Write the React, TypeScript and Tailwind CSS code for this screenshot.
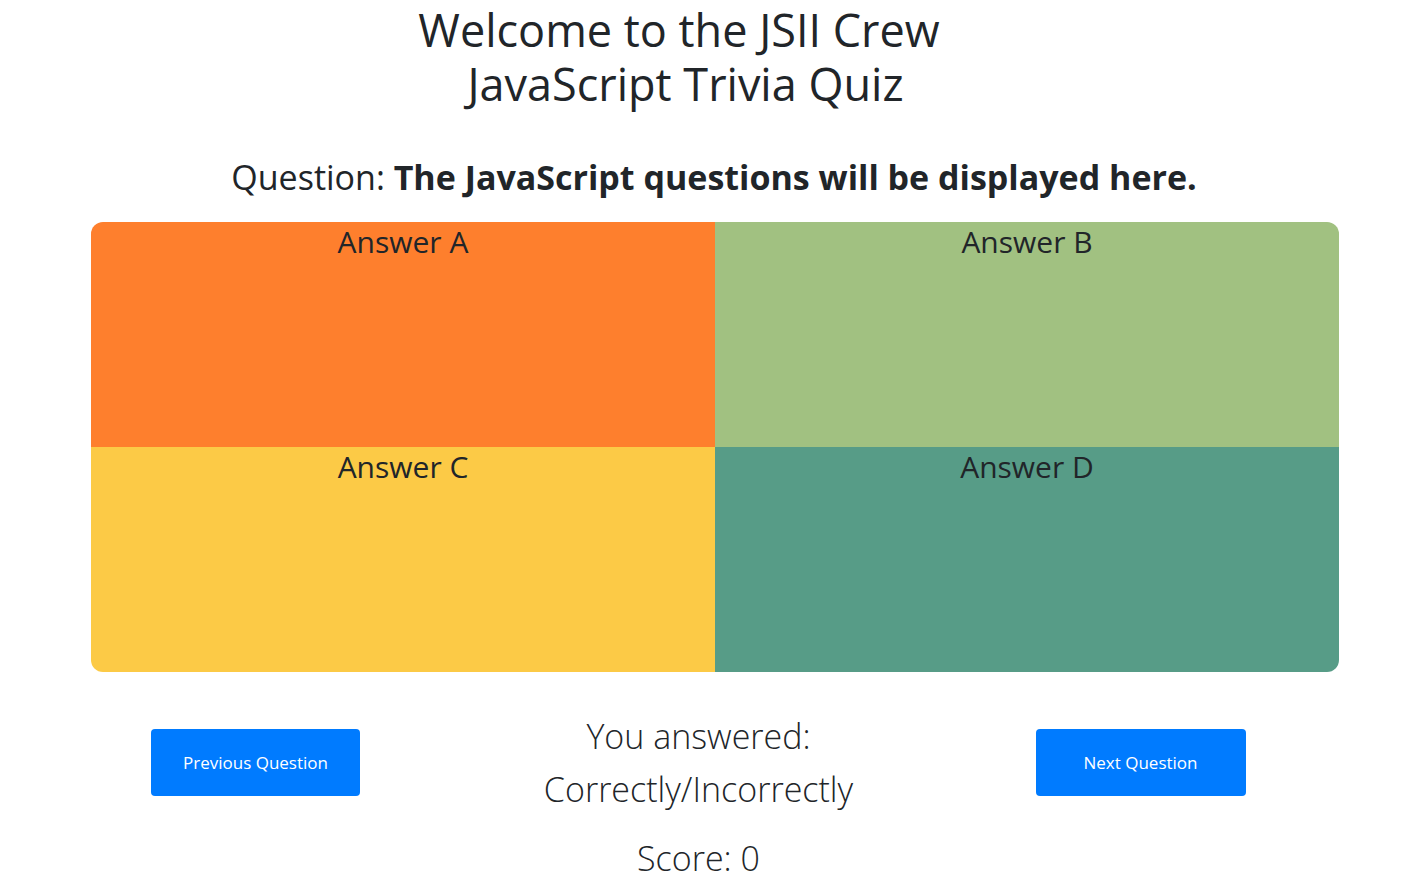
import React from "react"

const answers = [
  { label: "Answer A", color: "bg-[#fe7f2d]", corner: "rounded-tl-xl" },
  { label: "Answer B", color: "bg-[#a1c181]", corner: "rounded-tr-xl" },
  { label: "Answer C", color: "bg-[#fcca46]", corner: "rounded-bl-xl" },
  { label: "Answer D", color: "bg-[#579c87]", corner: "rounded-br-xl" },
]

export default function App() {
  return (
    <div className="min-h-[896px] bg-white text-[#212529] font-['Open_Sans',sans-serif]">
      <h1 className="pt-[3px] text-center text-[45px] font-medium leading-[54px]">
        <span className="block pr-[70px]">Welcome to the JSII Crew</span>
        <span className="block pr-[57px]">JavaScript Trivia Quiz</span>
      </h1>

      <h2 className="mt-[46px] text-center text-[34px] font-medium leading-[40px]">
        Question: <span className="font-bold">The JavaScript questions will be displayed here.</span>
      </h2>

      <div className="ml-[91px] mt-[25px] grid w-[1248px] grid-cols-2">
        {answers.map((a) => (
          <div key={a.label} className={`h-[225px] ${a.color} ${a.corner} text-center`}>
            <h3 className="text-[30px] font-medium leading-[40px]">{a.label}</h3>
          </div>
        ))}
      </div>

      <div className="ml-[34px] mt-[38px] grid w-[1329px] grid-cols-3 items-start">
        <div className="flex justify-center pt-[19px]">
          <button className="h-[67px] w-[209px] rounded bg-[#007bff] text-[17px] text-white">
            Previous Question
          </button>
        </div>
        <div className="text-center text-[34px] font-light">
          <p className="leading-[53px]">
            You answered:
            <br />
            Correctly/Incorrectly
          </p>
          <p className="mt-[16px] leading-[53px]">Score: 0</p>
        </div>
        <div className="flex justify-center pt-[19px]">
          <button className="-ml-[2px] h-[67px] w-[210px] rounded bg-[#007bff] text-[17px] text-white">
            Next Question
          </button>
        </div>
      </div>
    </div>
  )
}
